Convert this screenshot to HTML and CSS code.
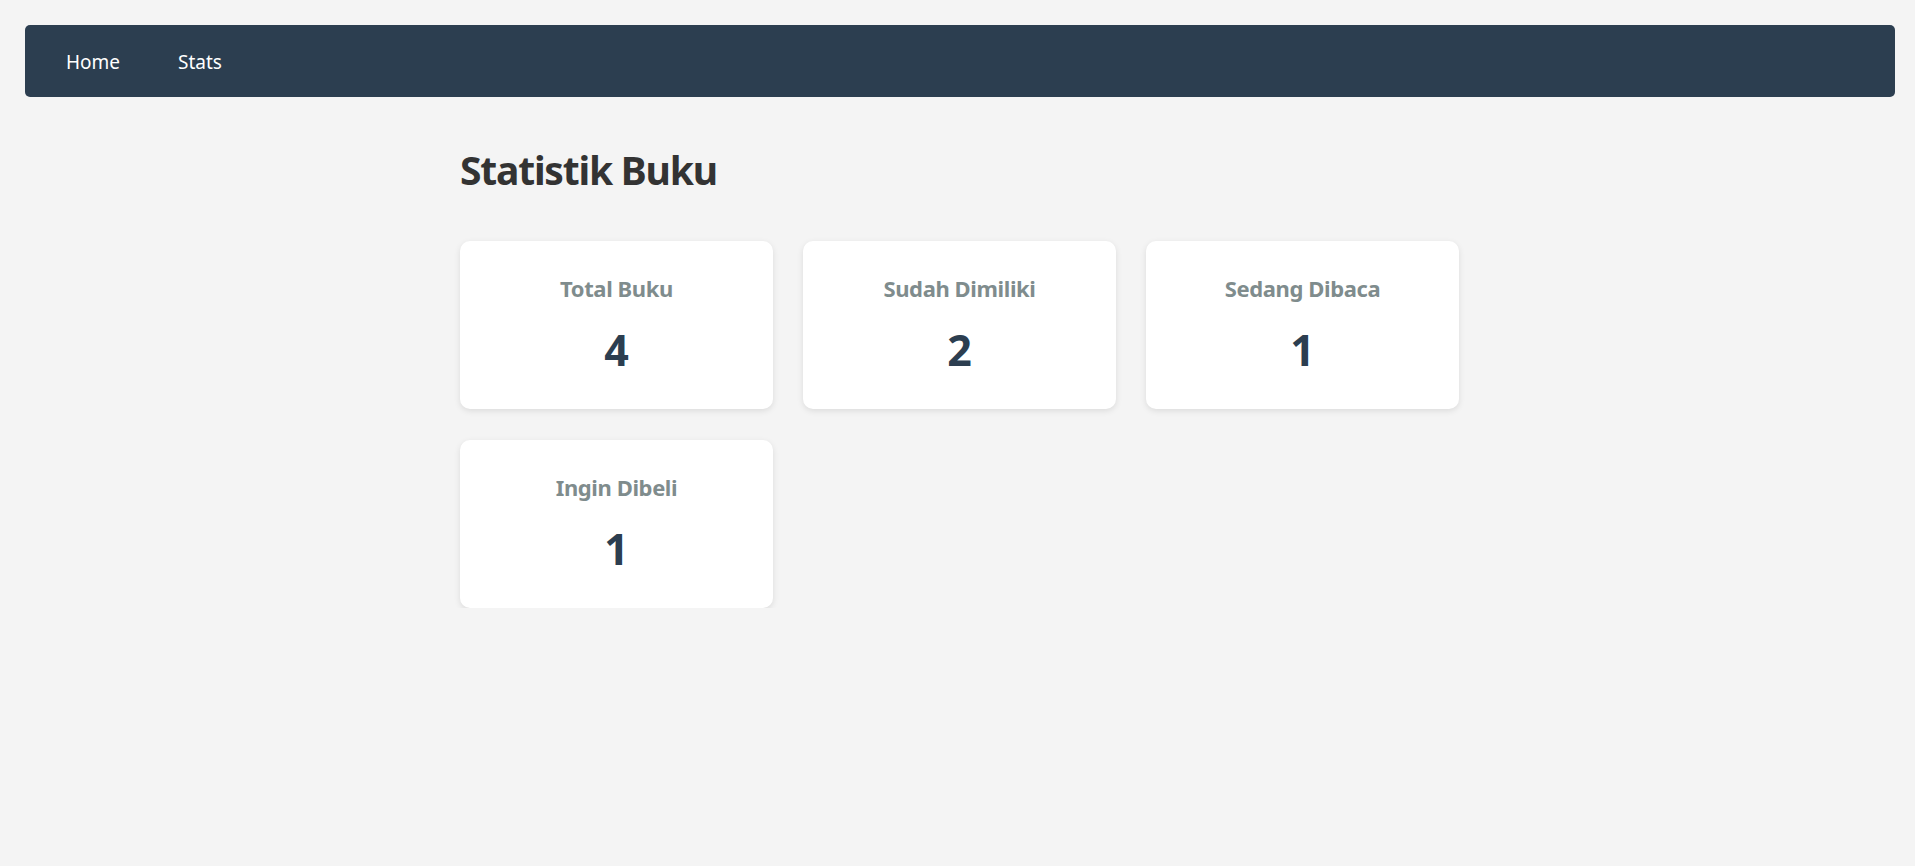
FILE: index.html
```html
<!DOCTYPE html>
<html lang="id">
<head>
<meta charset="utf-8">
<title>Statistik Buku</title>
<link rel="stylesheet" href="styles.css">
</head>
<body>
<nav class="navbar">
  <a class="nav-link" href="#">Home</a>
  <a class="nav-link" href="#">Stats</a>
</nav>
<main class="container">
  <h1 class="page-title">Statistik Buku</h1>
  <div class="stats-grid">
    <div class="stat-card">
      <h3 class="stat-label">Total Buku</h3>
      <p class="stat-value">4</p>
    </div>
    <div class="stat-card">
      <h3 class="stat-label">Sudah Dimiliki</h3>
      <p class="stat-value">2</p>
    </div>
    <div class="stat-card">
      <h3 class="stat-label">Sedang Dibaca</h3>
      <p class="stat-value">1</p>
    </div>
    <div class="stat-card">
      <h3 class="stat-label">Ingin Dibeli</h3>
      <p class="stat-value">1</p>
    </div>
  </div>
</main>
</body>
</html>
```

FILE: styles.css
```css
html, body {
  margin: 0;
}
body {
  padding: 25px 0 0 5px;
  background: #f4f4f4;
  font-family: "Noto Sans", "Open Sans", sans-serif;
  color: #333;
}
.navbar {
  margin: 0 20px;
  height: 72px;
  background: #2c3e50;
  border-radius: 5px;
  display: flex;
  align-items: center;
  padding: 2px 41px 0;
  box-sizing: border-box;
  gap: 58px;
}
.nav-link {
  color: #fff;
  text-decoration: none;
  font-size: 19px;
}
.container {
  width: 1000px;
  margin: 0 auto;
}
.page-title {
  font-size: 39px;
  line-height: 48px;
  margin: 49px 0 47px;
  font-weight: 700;
  letter-spacing: -1.2px;
  color: #333;
}
.stats-grid {
  display: grid;
  grid-template-columns: repeat(3, 313px);
  gap: 31px 30px;
}
.stat-card {
  background: #fff;
  border-radius: 10px;
  box-shadow: 0 2px 6px rgba(0,0,0,0.1);
  height: 168px;
  box-sizing: border-box;
  padding: 32px 20px 0;
  text-align: center;
}
.stat-label {
  margin: 0;
  font-size: 22px;
  line-height: 30px;
  font-weight: 700;
  letter-spacing: -0.4px;
  color: #7f8c8d;
}
.stat-value {
  margin: 22px 0 0;
  font-size: 43px;
  line-height: 50px;
  font-weight: 700;
  color: #2c3e50;
}
```
